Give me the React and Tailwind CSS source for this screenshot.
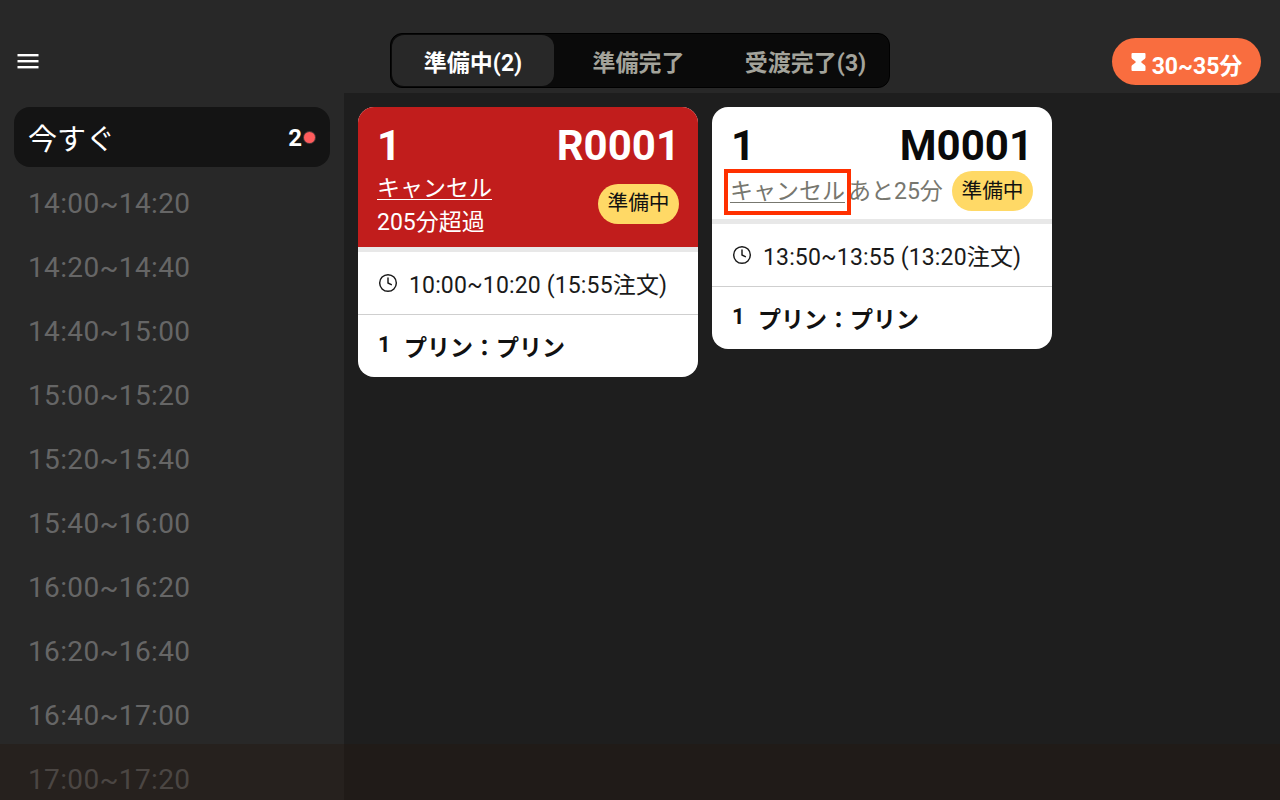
import { Clock } from 'lucide-react';

const FONT = "font-['Roboto','Noto_Sans_CJK_JP',sans-serif]";

const slots = [
  '14:00~14:20',
  '14:20~14:40',
  '14:40~15:00',
  '15:00~15:20',
  '15:20~15:40',
  '15:40~16:00',
  '16:00~16:20',
  '16:20~16:40',
  '16:40~17:00',
  '17:00~17:20',
];

function StatusPill() {
  return (
    <span className="flex h-10 w-[81px] shrink-0 items-center justify-center rounded-full bg-[#ffd966] pt-px text-[20.7px] text-[#111]">
      準備中
    </span>
  );
}

function CardBody({ time }) {
  return (
    <>
      <div className="h-[5px] bg-[#e8e8e8]" />
      <div className="flex h-[63px] items-center gap-[11px] border-b border-[#cfcfcf] px-5 text-[23px] leading-none tracking-[0.15px] text-[#1a1a1a]">
        <Clock size={20} strokeWidth={1.75} className="-mt-[1px] shrink-0" />
        <span className="pt-[5px] whitespace-nowrap">{time}</span>
      </div>
      <div className="flex h-[62px] items-center px-5 text-[#111]">
        <span className="-mt-[3px] w-[26px] text-[22px] font-bold">1</span>
        <span className="pt-[7px] text-[23px] font-bold whitespace-nowrap">プリン：プリン</span>
      </div>
    </>
  );
}

export default function App() {
  return (
    <div className={`relative flex h-[800px] w-[1280px] flex-col overflow-hidden bg-[#1e1e1e] ${FONT}`}>
      {/* Header */}
      <header className="relative flex h-[93px] shrink-0 items-center justify-between bg-[#282828] pr-[19px] pl-[17px]">
        <svg width="22" height="15" viewBox="0 0 22 15" fill="white" className="mt-[29px]">
          <rect x="0.5" y="0" width="21" height="2.4" />
          <rect x="0.5" y="6" width="21" height="2.4" />
          <rect x="0.5" y="12" width="21" height="2.4" />
        </svg>
        <div className="absolute top-[33px] left-[390px] flex h-[55px] w-[500px] rounded-xl border border-[#000] bg-[#0a0a0a] p-px">
          <div className="flex w-[162px] items-center justify-center rounded-xl bg-[#282828] pt-[7px] text-[23px] font-bold text-white">
            準備中(2)
          </div>
          <div className="flex w-[169px] items-center justify-center pt-[7px] text-[23px] font-bold text-[#a3a39b]">
            準備完了
          </div>
          <div className="flex flex-1 items-center justify-center pt-[7px] text-[23px] font-bold text-[#a3a39b]">
            受渡完了(3)
          </div>
        </div>
        <div className="mt-[29px] flex h-[47px] w-[149px] items-center justify-center gap-[6px] rounded-full bg-[#f96d3f] text-[23px] font-bold text-white">
          <svg width="15" height="18" viewBox="0 0 15 18" fill="white" className="mt-px">
            <path d="M0.5 1Q0.5 0 1.5 0H13.5Q14.5 0 14.5 1V4.5C14.5 6 11 7.6 10 9C11 10.4 14.5 12 14.5 13.5V17Q14.5 18 13.5 18H1.5Q0.5 18 0.5 17V13.5C0.5 12 4 10.4 5 9C4 7.6 0.5 6 0.5 4.5Z" />
          </svg>
          <span className="pt-[12px]">30~35分</span>
        </div>
      </header>

      <div className="flex min-h-0 flex-1">
        {/* Time slots */}
        <aside className="w-[344px] shrink-0 bg-[#282828] px-[14px] pt-[14px]">
          <div className="flex h-[60px] items-center justify-between rounded-2xl bg-[#141414] pr-[15px] pl-[14px]">
            <span className="pt-[7px] text-[29px] text-white">今すぐ</span>
            <div className="flex items-center gap-[2px]">
              <span className="pt-[2px] text-[24px] font-bold text-white">2</span>
              <span className="h-[11px] w-[11px] rounded-full bg-[#ff5c5c] ring-1 ring-[#55393a]" />
            </div>
          </div>
          <ul className="mt-[5px]">
            {slots.map((slot) => (
              <li key={slot} className="flex h-16 items-center pl-[14px] text-[28px] tracking-[0.35px] text-[#666]">
                {slot}
              </li>
            ))}
          </ul>
        </aside>

        {/* Orders */}
        <main className="flex items-start gap-[14px] px-[14px] pt-[14px]">
          <article className="w-[340px] overflow-hidden rounded-2xl bg-white">
            <div className="flex h-[140px] flex-col bg-[#c11d1c] pt-[13px] pr-[18px] pl-[19px] text-white">
              <div className="flex items-center justify-between text-[42px] leading-[52px] font-bold">
                <span>1</span>
                <span>R0001</span>
              </div>
              <div className="flex items-center justify-between">
                <div className="text-[23px] leading-[34px]">
                  <div className="w-fit underline decoration-1 underline-offset-[3px]">キャンセル</div>
                  <div>205分超過</div>
                </div>
                <div className="-mt-[5px] mr-px">
                  <StatusPill />
                </div>
              </div>
            </div>
            <CardBody time="10:00~10:20 (15:55注文)" />
          </article>

          <article className="w-[340px] overflow-hidden rounded-2xl bg-white">
            <div className="flex h-[112px] flex-col pt-[13px] pr-[19px] pl-[18px]">
              <div className="flex items-center justify-between text-[42px] leading-[52px] font-bold text-[#0a0a0a]">
                <span className="ml-px">1</span>
                <span>M0001</span>
              </div>
              <div className="-mt-[1px] flex items-center justify-between text-[23px] text-[#77776f]">
                <div className="flex pt-[2px] whitespace-nowrap">
                  <span className="underline decoration-1 underline-offset-[3px]">キャンセル</span>
                  <span className="ml-[3px]">あと25分</span>
                </div>
                <StatusPill />
              </div>
            </div>
            <CardBody time="13:50~13:55 (13:20注文)" />
          </article>
        </main>
      </div>

      {/* Highlight around the cancel link */}
      <div className="pointer-events-none absolute top-[169px] left-[724px] h-[46px] w-[127px] border-4 border-[#ff3000]" />

      {/* Bottom overlay */}
      <div className="pointer-events-none absolute inset-x-0 bottom-0 h-[56px] bg-[#23160f]/40" />
    </div>
  );
}
